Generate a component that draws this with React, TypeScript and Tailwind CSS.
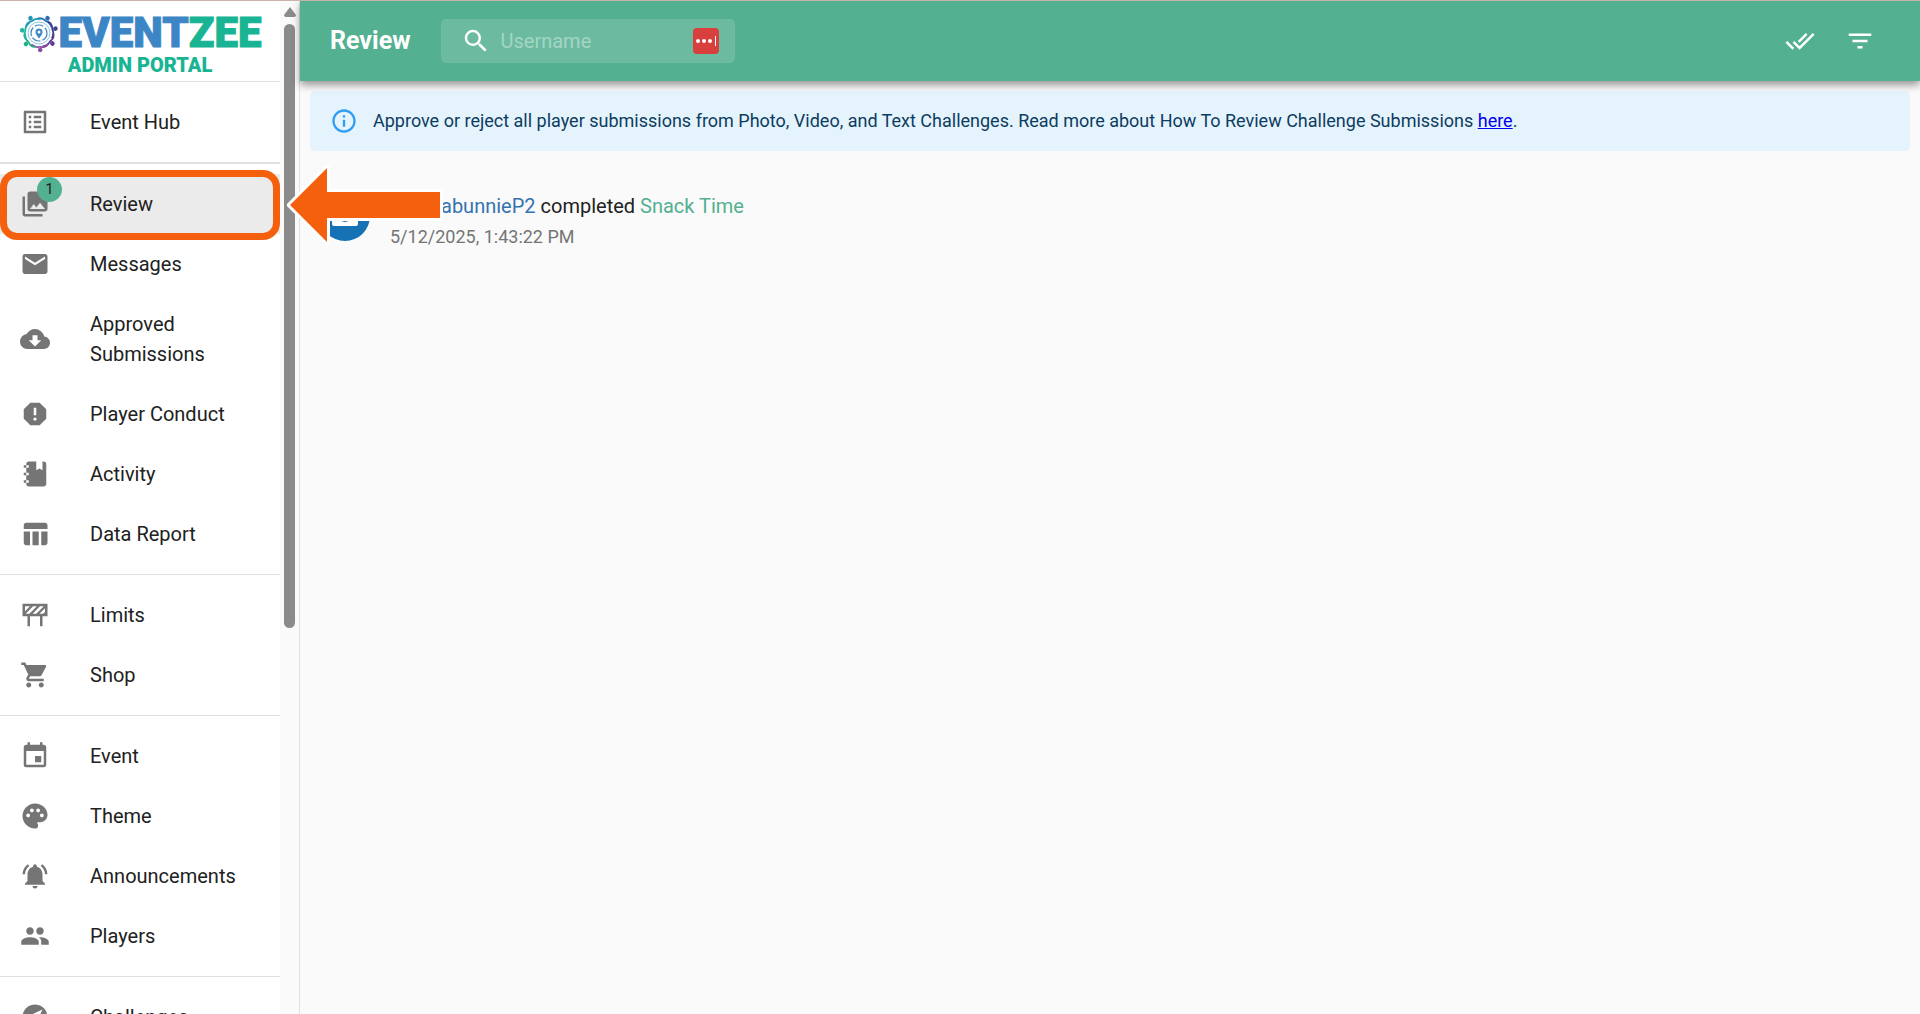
import { Fragment } from "react";
import type { ReactNode } from "react";
import {
  MdCloudDownload,
  MdCollections,
  MdDoneAll,
  MdEmail,
  MdEvent,
  MdExplore,
  MdFilterList,
  MdInfoOutline,
  MdListAlt,
  MdNotificationsActive,
  MdPalette,
  MdPeople,
  MdReport,
  MdSearch,
  MdShoppingCart,
  MdTableChart,
} from "react-icons/md";

type NavItem = {
  label: string;
  icon: ReactNode;
  badge?: number;
  active?: boolean;
};

function NotebookIcon() {
  return (
    <svg viewBox="0 0 24 24" width="30" height="30" fill="currentColor">
      <path d="M3,7V5H5V4C5,2.89 5.9,2 7,2H13V9L15.5,7.5L18,9V2H19C20.05,2 21,2.95 21,4V20C21,21.05 20.05,22 19,22H7C5.95,22 5,21.05 5,20V19H3V17H5V13H3V11H5V7H3M7,11H5V13H7V11M7,7V5H5V7H7M7,19V17H5V19H7Z" />
    </svg>
  );
}

function BarrierIcon() {
  return (
    <svg viewBox="0 0 24 24" width="30" height="30" fill="currentColor">
      <path
        fillRule="evenodd"
        d="M2,3H22V13H18V21H16V13H8V21H6V13H2ZM4,5V9L8,5ZM10.5,5L4.5,11H7.5L13.5,5ZM16,5L10,11H13L19,5ZM20,6.5L15.5,11H18.5L20,9.5Z"
      />
    </svg>
  );
}

function Emblem() {
  const people = [
    { angle: -60, color: "#2c6db5" },
    { angle: -15, color: "#3b3f92" },
    { angle: 38, color: "#5d3c98" },
    { angle: 86, color: "#8d4aa4" },
    { angle: 140, color: "#23b184" },
    { angle: 189, color: "#20b6a0" },
    { angle: 240, color: "#2497b6" },
  ];
  return (
    <svg viewBox="-20 -20 40 40" width="40" height="40" fill="none">
      {people.map(({ angle, color }) => (
        <g key={angle} transform={`rotate(${angle})`}>
          <circle cx="17" cy="0" r="2.3" fill={color} />
          <path
            d="M11.5,-8.5Q15.5,-6 13.8,0Q15,4 11,8.5"
            stroke={color}
            strokeWidth="1.8"
          />
        </g>
      ))}
      <circle r="11" fill="#fff" stroke="#8fc3e6" strokeWidth="1" />
      <circle r="8" stroke="#3d86c6" strokeWidth="1.2" strokeDasharray="9 2" />
      <path
        d="M0,5.5C-2,2.5 -3.5,1 -3.5,-1A3.5,3.5 0 1 1 3.5,-1C3.5,1 2,2.5 0,5.5Z"
        fill="#3d86c6"
      />
      <circle cy="-1" r="1.5" fill="#fff" />
    </svg>
  );
}

const sections: NavItem[][] = [
  [{ label: "Event Hub", icon: <MdListAlt size={30} /> }],
  [
    { label: "Review", icon: <MdCollections size={30} />, badge: 1, active: true },
    { label: "Messages", icon: <MdEmail size={30} /> },
    { label: "Approved Submissions", icon: <MdCloudDownload size={30} /> },
    { label: "Player Conduct", icon: <MdReport size={30} /> },
    { label: "Activity", icon: <NotebookIcon /> },
    { label: "Data Report", icon: <MdTableChart size={30} /> },
  ],
  [
    { label: "Limits", icon: <BarrierIcon /> },
    { label: "Shop", icon: <MdShoppingCart size={30} /> },
  ],
  [
    { label: "Event", icon: <MdEvent size={30} /> },
    { label: "Theme", icon: <MdPalette size={30} /> },
    { label: "Announcements", icon: <MdNotificationsActive size={30} /> },
    { label: "Players", icon: <MdPeople size={30} /> },
  ],
  [{ label: "Challenges", icon: <MdExplore size={30} /> }],
];

function NavRow({ item }: { item: NavItem }) {
  return (
    <li className="relative">
      <a
        href="#"
        className={
          item.active
            ? "flex items-center bg-[#ebebeb] py-[15px] pl-5 pr-5"
            : "flex items-center py-[15px] pl-5 pr-5"
        }
      >
        <span className="relative mr-10 shrink-0 text-[#757575]">
          {item.icon}
          {item.badge && (
            <span className="absolute -right-3 -top-3 flex h-[25px] w-[25px] items-center justify-center rounded-full bg-[#53b091] text-[15px] text-[#212121]">
              {item.badge}
            </span>
          )}
        </span>
        <span className="text-xl leading-[30px]">{item.label}</span>
      </a>
      {item.active && (
        <span className="pointer-events-none absolute inset-x-0 -bottom-1.5 -top-1 rounded-[17px] border-7 border-[#f5600f]" />
      )}
    </li>
  );
}

function Sidebar() {
  return (
    <aside className="flex w-[300px] shrink-0 overflow-hidden border-r border-[#e0e0e0] bg-[#fafafa]">
      <div className="w-[280px] shrink-0 bg-white">
        <div className="flex h-20 flex-col items-center pt-3">
          <div className="flex h-10 items-center">
            <Emblem />
            <span className="text-[42px] font-black leading-10 text-[#3d86c6] [-webkit-text-stroke:1px]">
              EVENT<span className="text-[#18b493]">ZEE</span>
            </span>
          </div>
          <span className="text-xl font-black leading-6 text-[#18b493]">
            ADMIN PORTAL
          </span>
        </div>
        <nav>
          {sections.map((items, i) => (
            <Fragment key={items[0].label}>
              <hr
                className={
                  i === 1
                    ? "border-t-2 border-[#e0e0e0]"
                    : "border-t border-[#e0e0e0]"
                }
              />
              <ul className="py-2.5">
                {items.map((item) => (
                  <NavRow key={item.label} item={item} />
                ))}
              </ul>
            </Fragment>
          ))}
        </nav>
      </div>
      <div className="flex flex-1 flex-col items-center pt-1.5">
        <svg viewBox="0 0 12 10" width="12" height="10" fill="#8b8b8b">
          <path d="M6,0L12,8Q12,10 10,10H2Q0,10 0,8Z" />
        </svg>
        <div className="mt-[7px] h-3/5 w-[11px] rounded-full bg-[#8b8b8b]" />
      </div>
    </aside>
  );
}

function Header() {
  return (
    <header className="z-10 flex h-20 shrink-0 items-center bg-[#53b091] px-[30px] text-white shadow-[0_4px_8px_rgba(0,0,0,0.4)]">
      <h1 className="text-[25px] font-bold">Review</h1>
      <label className="ml-[30px] flex h-11 w-[294px] items-center rounded-[5px] bg-white/15 pl-5 pr-4">
        <MdSearch size={30} />
        <input
          type="text"
          aria-label="Username"
          placeholder="Username"
          className="ml-2.5 min-w-0 flex-1 bg-transparent text-xl outline-none placeholder:text-white/40"
        />
        <svg viewBox="0 0 26 26" width="26" height="26" fill="#fff">
          <rect width="26" height="26" rx="4" fill="#d93f3c" />
          <circle cx="5" cy="13" r="2" />
          <circle cx="11" cy="13" r="2" />
          <circle cx="17" cy="13" r="2" />
          <rect x="22" y="8" width="1" height="10" />
        </svg>
      </label>
      <div className="ml-auto flex">
        <button type="button" aria-label="Approve all" className="p-[15px]">
          <MdDoneAll size={30} />
        </button>
        <button type="button" aria-label="Filter" className="p-[15px]">
          <MdFilterList size={30} />
        </button>
      </div>
    </header>
  );
}

function Submission() {
  return (
    <article className="relative mt-10 flex items-start px-2.5">
      <svg viewBox="0 0 50 50" width="50" height="50">
        <circle cx="25" cy="25" r="25" fill="#1672b5" />
        <rect x="12" y="14" width="26" height="21" rx="2" fill="#fff" />
        <circle cx="25" cy="25" r="6" fill="#1672b5" />
      </svg>
      <div className="ml-5">
        <p className="pl-[51px] text-xl leading-[30px]">
          <a href="#" className="text-[#3572b0]">
            abunnieP2
          </a>{" "}
          completed{" "}
          <a href="#" className="text-[#53b091]">
            Snack Time
          </a>
        </p>
        <p className="text-lg leading-8 text-[#757575]">
          5/12/2025, 1:43:22 PM
        </p>
      </div>
      {/* pointer towards the active nav item */}
      <svg
        viewBox="0 0 160 84"
        width="160"
        height="84"
        className="absolute -left-[25px] -top-7"
      >
        <path
          d="M5,42L42,5V29H155V55H42V79Z"
          fill="#f5600f"
          stroke="#fff"
          strokeWidth="6"
          strokeLinejoin="round"
          paintOrder="stroke"
        />
      </svg>
    </article>
  );
}

export default function App() {
  return (
    <div className="flex h-screen overflow-hidden border-t border-[#c9b1ad] bg-[#fafafa] font-['Roboto',sans-serif] text-[#212121]">
      <Sidebar />
      <div className="flex min-w-0 flex-1 flex-col">
        <Header />
        <main className="p-2.5">
          <div className="flex items-center rounded-[5px] bg-[#e5f3fd] px-5 py-[15px] text-[#0d3c61]">
            <MdInfoOutline size={28} className="text-[#2f9df4]" />
            <p className="ml-[15px] text-lg leading-[30px]">
              Approve or reject all player submissions from Photo, Video, and
              Text Challenges. Read more about How To Review Challenge
              Submissions{" "}
              <a href="#" className="text-[#0000ee] underline">
                here
              </a>
              .
            </p>
          </div>
          <Submission />
        </main>
      </div>
    </div>
  );
}
